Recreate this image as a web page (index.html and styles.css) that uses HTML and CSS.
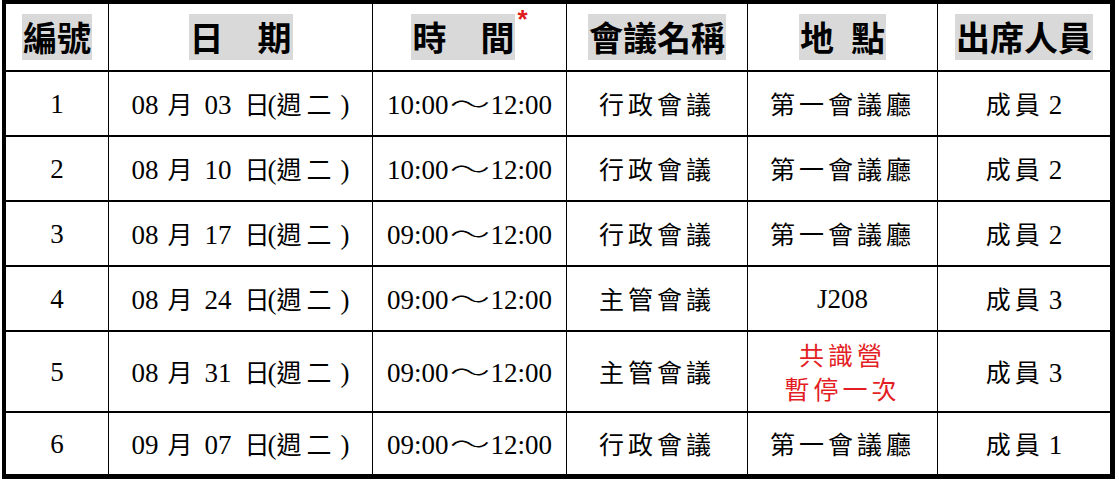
FILE: index.html
```html
<!DOCTYPE html>
<html lang="zh-Hant">
<head>
<meta charset="utf-8">
<title>會議時間表</title>
<link rel="stylesheet" href="styles.css">
</head>
<body>
<table class="sched">
  <thead>
    <tr>
      <th class="c1"><span class="hl">編號</span></th>
      <th class="c2"><span class="hl">日　期</span></th>
      <th class="c3"><span class="hl">時　間</span><span class="star">*</span></th>
      <th class="c4"><span class="hl">會議名稱</span></th>
      <th class="c5"><span class="hl">地&ensp;點</span></th>
      <th class="c6"><span class="hl">出席人員</span></th>
    </tr>
  </thead>
  <tbody>
    <tr class="r">
      <td>1</td>
      <td>08<span class="mo">月</span>03<span class="dy">日</span>(<span class="wk">週二</span>)</td>
      <td>10:00<span class="tilde">～</span>12:00</td>
      <td><span class="cj">行政會議</span></td>
      <td><span class="cj">第一會議廳</span></td>
      <td><span class="mb">成員</span>2</td>
    </tr>
    <tr class="r">
      <td>2</td>
      <td>08<span class="mo">月</span>10<span class="dy">日</span>(<span class="wk">週二</span>)</td>
      <td>10:00<span class="tilde">～</span>12:00</td>
      <td><span class="cj">行政會議</span></td>
      <td><span class="cj">第一會議廳</span></td>
      <td><span class="mb">成員</span>2</td>
    </tr>
    <tr class="r">
      <td>3</td>
      <td>08<span class="mo">月</span>17<span class="dy">日</span>(<span class="wk">週二</span>)</td>
      <td>09:00<span class="tilde">～</span>12:00</td>
      <td><span class="cj">行政會議</span></td>
      <td><span class="cj">第一會議廳</span></td>
      <td><span class="mb">成員</span>2</td>
    </tr>
    <tr class="r">
      <td>4</td>
      <td>08<span class="mo">月</span>24<span class="dy">日</span>(<span class="wk">週二</span>)</td>
      <td>09:00<span class="tilde">～</span>12:00</td>
      <td><span class="cj">主管會議</span></td>
      <td>J208</td>
      <td><span class="mb">成員</span>3</td>
    </tr>
    <tr class="r tall">
      <td>5</td>
      <td>08<span class="mo">月</span>31<span class="dy">日</span>(<span class="wk">週二</span>)</td>
      <td>09:00<span class="tilde">～</span>12:00</td>
      <td><span class="cj">主管會議</span></td>
      <td class="note"><span class="cj">共識營</span><br><span class="cj">暫停一次</span></td>
      <td><span class="mb">成員</span>3</td>
    </tr>
    <tr class="r last">
      <td>6</td>
      <td>09<span class="mo">月</span>07<span class="dy">日</span>(<span class="wk">週二</span>)</td>
      <td>09:00<span class="tilde">～</span>12:00</td>
      <td><span class="cj">行政會議</span></td>
      <td><span class="cj">第一會議廳</span></td>
      <td><span class="mb">成員</span>1</td>
    </tr>
  </tbody>
</table>
</body>
</html>
```

FILE: styles.css
```css
html, body {
  margin: 0;
  padding: 0;
  background: #ffffff;
}

.sched {
  box-sizing: border-box;
  width: 1113px;
  margin: 0 0 0 2px;
  table-layout: fixed;
  border-collapse: separate;
  border-spacing: 0;
  border-style: solid;
  border-color: #000;
  border-width: 4px 5px 5px 4px;
  font-family: "Liberation Serif", "Noto Sans CJK TC", serif;
  color: #000;
}

.sched th,
.sched td {
  box-sizing: border-box;
  padding: 0;
  text-align: center;
  vertical-align: middle;
  white-space: nowrap;
  border-right: 1px solid #000;
  border-bottom: 2px solid #000;
}

.sched th:last-child,
.sched td:last-child {
  border-right: none;
}

.sched .last td {
  border-bottom: none;
}

.c1 { width: 103px; }
.c2 { width: 264px; }
.c3 { width: 194px; }
.c4 { width: 181px; }
.c5 { width: 190px; }
.c6 { width: 172px; }

.sched th {
  height: 68px;
  font-family: "Noto Sans CJK TC", sans-serif;
  font-weight: 700;
  font-size: 34px;
  line-height: 46px;
}

.hl {
  display: inline-block;
  background: #d9d9d9;
  line-height: 46px;
  padding: 0 1px;
}

.star {
  display: inline-block;
  color: #e01b1b;
  font-family: "Liberation Sans", sans-serif;
  font-weight: 700;
  font-size: 26px;
  line-height: 26px;
  vertical-align: top;
  margin-top: -8px;
  margin-left: 2px;
}

.sched td {
  height: 65px;
  font-size: 27px;
  line-height: 32px;
  font-weight: 400;
}

.sched .tall td {
  height: 81px;
}

.sched .last td {
  height: 61px;
}

.cj {
  font-family: "Noto Sans CJK TC", sans-serif;
  font-size: 25px;
  letter-spacing: 4px;
}

.mb {
  font-family: "Noto Sans CJK TC", sans-serif;
  font-size: 25px;
  letter-spacing: 4px;
  margin-right: 5px;
}

.mo,
.dy,
.wk {
  font-family: "Noto Sans CJK TC", sans-serif;
  font-size: 25px;
}

.mo {
  margin: 0 12px 0 9px;
}

.dy {
  margin: 0 -2px 0 13px;
}

.wk {
  letter-spacing: 5px;
  margin-right: 4px;
}

.tilde {
  font-family: "Noto Sans CJK TC", sans-serif;
  font-size: 26px;
  font-weight: 300;
  display: inline-block;
  width: 26px;
  margin: 0 8px;
  transform: scaleX(1.55);
}

.note {
  color: #e31e24;
  line-height: 36px;
}
```
